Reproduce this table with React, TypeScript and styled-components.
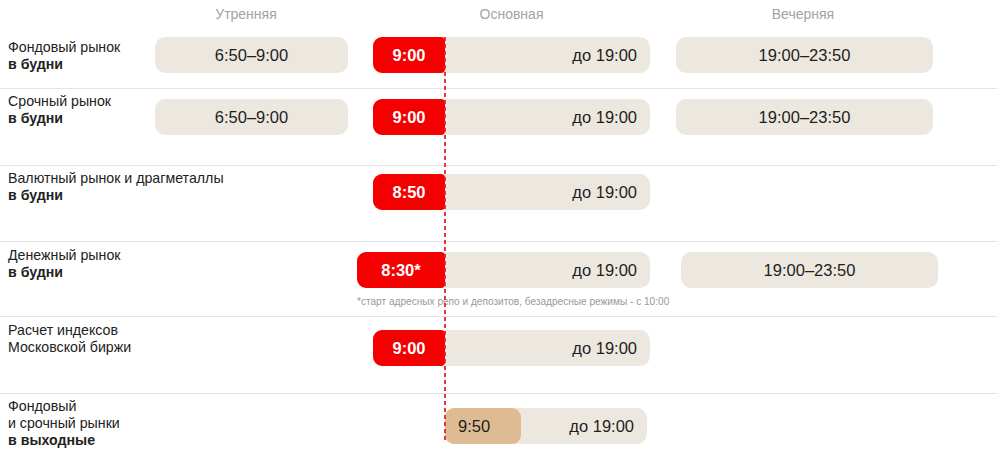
import React from "react";
import styled, { createGlobalStyle } from "styled-components";

const GlobalStyle = createGlobalStyle`
  html, body { margin: 0; padding: 0; background: #ffffff; }
  body {
    font-family: "Liberation Sans", Arial, Helvetica, sans-serif;
    color: #222222;
    -webkit-font-smoothing: antialiased;
  }
  * { box-sizing: border-box; }
`;

const BEIGE = "#ede8df";
const RED = "#f50000";
const TAN = "#debb93";

const Board = styled.div`
  position: relative;
  width: 997px;
`;

const grid = `
  display: grid;
  grid-template-columns: 155px 193px 25px 277px 26px 1fr;
  align-items: start;
`;

const HeaderRow = styled.div`
  ${grid};
  height: 28px;
  align-items: center;
`;

const HeaderCell = styled.div<{ $col: number; $padRight?: number }>`
  grid-column: ${(p) => p.$col};
  text-align: center;
  font-size: 14px;
  color: #a3a3a3;
  padding-right: ${(p) => p.$padRight ?? 0}px;
`;

const Row = styled.div<{ $h: number; $first?: boolean }>`
  ${grid};
  height: ${(p) => p.$h}px;
  border-top: ${(p) => (p.$first ? "none" : "1px solid #e4e4e4")};
`;

const Label = styled.div<{ $top: number }>`
  grid-column: 1;
  grid-row: 1;
  padding-left: 8px;
  margin-top: ${(p) => p.$top}px;
  font-size: 14.2px;
  line-height: 17px;
  white-space: nowrap;
  color: #222;
`;

const Line = styled.span<{ $bold?: boolean }>`
  display: block;
  font-weight: ${(p) => (p.$bold ? 700 : 400)};
`;

const Pill = styled.div`
  height: 36px;
  border-radius: 10px;
  background: ${BEIGE};
  display: flex;
  align-items: center;
  justify-content: center;
  font-size: 16.5px;
  color: #1e1e1e;
`;

const MorningPill = styled(Pill)<{ $top: number }>`
  grid-column: 2;
  grid-row: 1;
  margin-top: ${(p) => p.$top}px;
`;

const EveningPill = styled(Pill)<{ $top: number; $shift?: number }>`
  grid-column: 6;
  grid-row: 1;
  width: 257px;
  margin-top: ${(p) => p.$top}px;
  margin-left: ${(p) => p.$shift ?? 0}px;
`;

const MainCell = styled.div<{ $top: number }>`
  grid-column: 4;
  grid-row: 1;
  margin-top: ${(p) => p.$top}px;
  display: grid;
  grid-template-columns: 72px 1fr;
`;

const StartPill = styled.div<{ $extend?: number }>`
  grid-column: 1;
  height: 36px;
  margin-left: ${(p) => -(p.$extend ?? 0)}px;
  border-radius: 9px 4px 4px 9px;
  background: ${RED};
  color: #ffffff;
  font-weight: 700;
  font-size: 16.5px;
  display: flex;
  align-items: center;
  justify-content: center;
`;

const MainBar = styled.div<{ $alone?: boolean }>`
  grid-column: 2;
  height: 36px;
  border-radius: ${(p) => (p.$alone ? "9px 10px 10px 9px" : "0 10px 10px 0")};
  margin-right: ${(p) => (p.$alone ? 3 : 0)}px;
  background: ${BEIGE};
  display: flex;
  align-items: center;
  justify-content: space-between;
  font-size: 16.5px;
  color: #1e1e1e;
  padding-right: 13px;
`;

const Until = styled.span`
  margin-left: auto;
`;

const WeekendStart = styled.div`
  width: 76px;
  height: 36px;
  border-radius: 9px;
  background: ${TAN};
  display: flex;
  align-items: center;
  padding-left: 13px;
`;

const Footnote = styled.div<{ $extend: number }>`
  grid-column: 1 / -1;
  margin-left: ${(p) => -p.$extend}px;
  margin-top: 8px;
  font-size: 10.1px;
  color: #9a9a9a;
  white-space: nowrap;
`;

const OpenLine = styled.div`
  position: absolute;
  left: 444px;
  top: 37px;
  width: 2px;
  height: 405px;
  background: repeating-linear-gradient(
    to bottom,
    #e3222c 0px,
    #e3222c 4px,
    rgba(255, 255, 255, 0) 4px,
    rgba(255, 255, 255, 0) 7px
  );
  opacity: 0.9;
`;

type RowData = {
  h: number;
  first?: boolean;
  labelTop: number;
  barTop: number;
  label: { text: string; bold?: boolean }[];
  morning?: string;
  start?: string;
  extend?: number;
  weekend?: string;
  evening?: string;
  eveningShift?: number;
  footnote?: string;
};

const rows: RowData[] = [
  {
    h: 60,
    first: true,
    labelTop: 11,
    barTop: 9,
    label: [{ text: "Фондовый рынок" }, { text: "в будни", bold: true }],
    morning: "6:50–9:00",
    start: "9:00",
    evening: "19:00–23:50",
  },
  {
    h: 77,
    labelTop: 4,
    barTop: 10,
    label: [{ text: "Срочный рынок" }, { text: "в будни", bold: true }],
    morning: "6:50–9:00",
    start: "9:00",
    evening: "19:00–23:50",
  },
  {
    h: 76,
    labelTop: 4,
    barTop: 8,
    label: [
      { text: "Валютный рынок и драгметаллы" },
      { text: "в будни", bold: true },
    ],
    start: "8:50",
  },
  {
    h: 75,
    labelTop: 5,
    barTop: 10,
    label: [{ text: "Денежный рынок" }, { text: "в будни", bold: true }],
    start: "8:30*",
    extend: 16,
    evening: "19:00–23:50",
    eveningShift: 5,
    footnote:
      "*старт адресных репо и депозитов, безадресные режимы - с 10:00",
  },
  {
    h: 77,
    labelTop: 5,
    barTop: 13,
    label: [{ text: "Расчет индексов" }, { text: "Московской биржи" }],
    start: "9:00",
  },
  {
    h: 64,
    labelTop: 4,
    barTop: 14,
    label: [
      { text: "Фондовый" },
      { text: "и срочный рынки" },
      { text: "в выходные", bold: true },
    ],
    weekend: "9:50",
  },
];

export default function App() {
  return (
    <>
      <GlobalStyle />
      <Board>
        <HeaderRow>
          <HeaderCell $col={2} $padRight={11}>
            Утренняя
          </HeaderCell>
          <HeaderCell $col={4}>Основная</HeaderCell>
          <HeaderCell $col={6} $padRight={67}>
            Вечерняя
          </HeaderCell>
        </HeaderRow>
        {rows.map((r, i) => (
          <Row key={i} $h={r.h} $first={r.first}>
            <Label $top={r.labelTop}>
              {r.label.map((l, j) => (
                <Line key={j} $bold={l.bold}>
                  {l.text}
                </Line>
              ))}
            </Label>
            {r.morning && <MorningPill $top={r.barTop}>{r.morning}</MorningPill>}
            <MainCell $top={r.barTop}>
              {r.start && <StartPill $extend={r.extend}>{r.start}</StartPill>}
              <MainBar $alone={!r.start}>
                {r.weekend && <WeekendStart>{r.weekend}</WeekendStart>}
                <Until>до 19:00</Until>
              </MainBar>
              {r.footnote && (
                <Footnote $extend={r.extend ?? 0}>{r.footnote}</Footnote>
              )}
            </MainCell>
            {r.evening && (
              <EveningPill $top={r.barTop} $shift={r.eveningShift}>
                {r.evening}
              </EveningPill>
            )}
          </Row>
        ))}
        <OpenLine />
      </Board>
    </>
  );
}
